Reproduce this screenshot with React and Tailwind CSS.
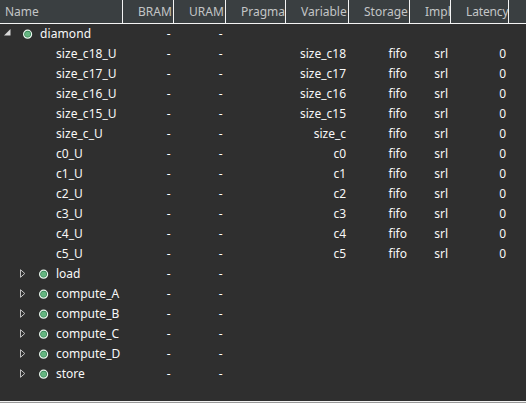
const GRID =
  'grid grid-cols-[123px_51px_52px_60px_63px_61px_41px_58px_17px]';

// Each label starts at a fixed inset and is clipped by its column's right edge.
const headers = [
  { label: 'BRAM', inset: 'pl-[15px]' },
  { label: 'URAM', inset: 'pl-[15px]' },
  { label: 'Pragma', inset: 'pl-[15px]' },
  { label: 'Variable', inset: 'pl-[15px]' },
  { label: 'Storage', inset: 'pl-[15px]' },
  { label: 'Impl', inset: 'pl-[15px]' },
  { label: 'Latency', inset: 'pl-[15px] tracking-[-0.15px]' },
];

const rows = [
  { name: 'diamond', kind: 'root' },
  { name: 'size_c18_U', variable: 'size_c18' },
  { name: 'size_c17_U', variable: 'size_c17' },
  { name: 'size_c16_U', variable: 'size_c16' },
  { name: 'size_c15_U', variable: 'size_c15' },
  { name: 'size_c_U', variable: 'size_c' },
  { name: 'c0_U', variable: 'c0' },
  { name: 'c1_U', variable: 'c1' },
  { name: 'c2_U', variable: 'c2' },
  { name: 'c3_U', variable: 'c3' },
  { name: 'c4_U', variable: 'c4' },
  { name: 'c5_U', variable: 'c5' },
  { name: 'load', kind: 'module' },
  { name: 'compute_A', kind: 'module' },
  { name: 'compute_B', kind: 'module' },
  { name: 'compute_C', kind: 'module' },
  { name: 'compute_D', kind: 'module' },
  { name: 'store', kind: 'module' },
];

function Dot() {
  return (
    <svg className="size-[10px] shrink-0" viewBox="0 0 10 10">
      <circle cx="4.6" cy="5.2" r="4" fill="#2f7d50" stroke="#eaf7ee" strokeWidth="1.2" />
      <circle cx="4.6" cy="5.2" r="2.6" fill="#65b580" />
    </svg>
  );
}

function NameCell({ row }) {
  if (row.kind === 'root') {
    return (
      <div className="flex h-5 items-center pl-1">
        <svg className="mb-[3px] mr-[12px] h-[7px] w-[7px] shrink-0" viewBox="0 0 7 7">
          <path d="M6.5 0V6.5H0Z" fill="#d8d8d8" />
        </svg>
        <Dot />
        <span className="ml-[7px] tracking-[0.1px]">{row.name}</span>
      </div>
    );
  }
  if (row.kind === 'module') {
    return (
      <div className="flex h-5 items-center pl-5">
        <svg className="mb-px mr-[13px] h-[9px] w-[6px] shrink-0" viewBox="0 0 6 9">
          <path d="M.5 .7V8.3L4.8 4.5Z" fill="none" stroke="#d0d0d0" strokeWidth=".9" />
        </svg>
        <Dot />
        <span className="ml-[7px]">{row.name}</span>
      </div>
    );
  }
  return <div className="flex h-5 items-center pl-14 tracking-[0.05px]">{row.name}</div>;
}

function Cell({ children }) {
  return <div className="flex h-5 items-center justify-end pr-[3px]">{children}</div>;
}

function DashCell() {
  return <div className="flex h-5 items-center justify-end pr-[3.5px] text-white">-</div>;
}

export default function App() {
  return (
    <div className="flex h-[403px] w-[526px] flex-col overflow-hidden whitespace-nowrap bg-[#2f2f2f] font-['Noto_Sans',sans-serif] text-[12px] leading-5 text-[#f8f8f8]">
      <div className={`${GRID} h-6 border-b border-[#f4f4f4] bg-[#3a3f41] text-[#c3c5c6]`}>
        <div className="border-r border-[#f4f4f4] pl-[5px] pt-[2px]">Name</div>
        {headers.map((h) => (
          <div key={h.label} className={`overflow-hidden border-r border-[#f4f4f4] pt-[2px] ${h.inset}`}>
            {h.label}
          </div>
        ))}
        <div />
      </div>
      <div className="flex-1">
        {rows.map((row) => (
          <div key={row.name} className={GRID}>
            <NameCell row={row} />
            <DashCell />
            <DashCell />
            <Cell />
            <Cell>{row.variable}</Cell>
            <Cell>{row.variable && 'fifo'}</Cell>
            <Cell>{row.variable && 'srl'}</Cell>
            <Cell>{row.variable && '0'}</Cell>
          </div>
        ))}
      </div>
      <div className="h-[2px] border-t border-[#f2f2f2] bg-[#999999]" />
    </div>
  );
}
